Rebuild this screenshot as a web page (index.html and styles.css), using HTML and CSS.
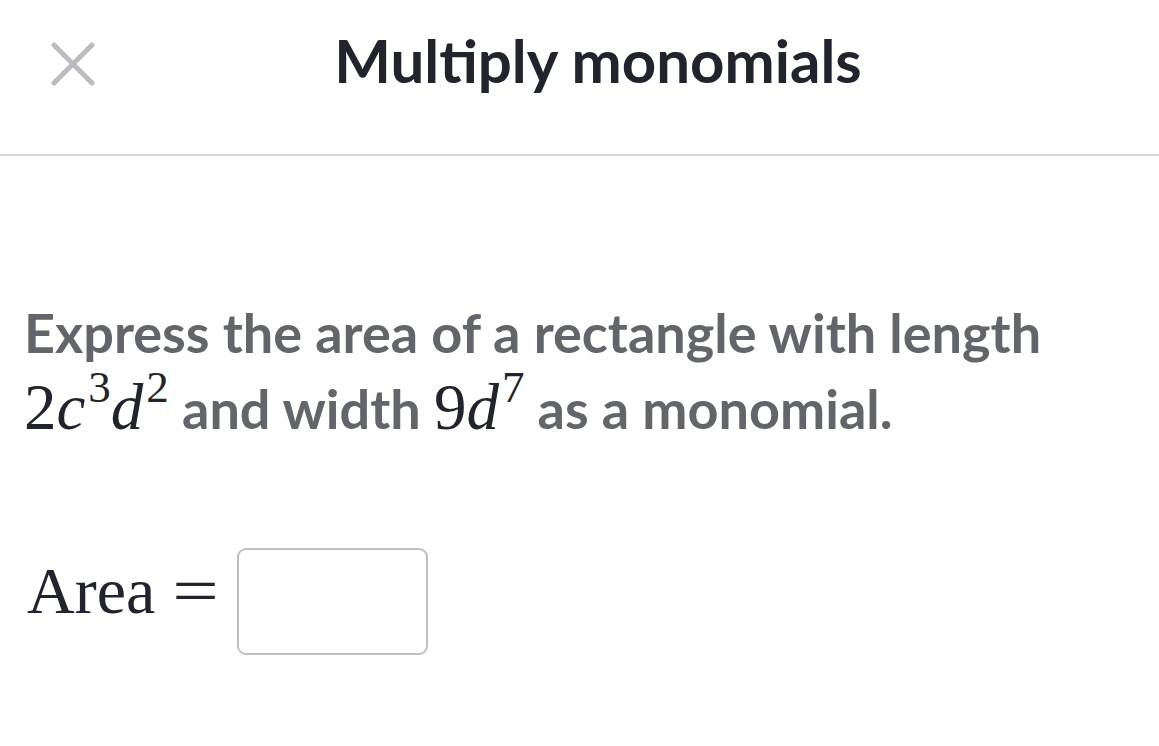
FILE: index.html
```html
<!DOCTYPE html>
<html>
<head>
<meta charset="utf-8">
<link rel="stylesheet" href="styles.css">
</head>
<body>
<header class="header">
  <button class="close" aria-label="Close">
    <svg width="44" height="44" viewBox="0 0 44 44"><path d="M3 3 L41 41 M41 3 L3 41" stroke="#babcc0" stroke-width="5" stroke-linecap="round" fill="none"/></svg>
  </button>
  <h1 class="title">Multiply monomials</h1>
</header>
<main class="content">
  <p class="question">Express the area of a rectangle with length <span class="math"><span class="num">2</span><i>c</i><sup>3</sup><i>d</i><sup>2</sup></span> and width <span class="math"><span class="num">9</span><i>d</i><sup>7</sup></span> as a monomial.</p>
  <div class="answer">
    <span class="math big">Area</span>
    <span class="math big eq">=</span>
    <div class="box"></div>
  </div>
</main>
</body>
</html>
```
FILE: styles.css
```css
html, body { margin: 0; padding: 0; background: #fff; }
body { font-family: Lato, "Noto Sans", sans-serif; width: 1159px; height: 746px; overflow: hidden; }
.header { position: relative; height: 154px; border-bottom: 2px solid #d6d6d6; display: flex; align-items: flex-start; }
.close { position: absolute; left: 51px; top: 42px; width: 44px; height: 44px; padding: 0; border: 0; background: none; display: block; }
.close svg { display: block; }
.title { flex: 1; margin: 0; padding: 24px 0 0 37px; text-align: center; font-size: 60px; font-weight: 700; color: #21242c; line-height: 72px; }
.content { padding: 0 24px; }
.question { margin: 140px 0 0; font-size: 54px; font-weight: 700; color: #626569; line-height: 74px; }
.math { font-family: "Liberation Serif", "Times New Roman", serif; font-weight: 400; color: #21242c; font-size: 65px; }
.math i { font-style: italic; }
.math sup { font-size: 45px; vertical-align: 0; position: relative; top: -27px; margin-left: 3px; line-height: 0; }
.answer { display: flex; align-items: center; margin-top: 102px; height: 106px; }
.big { font-size: 66px; line-height: 1; position: relative; top: -10px; }
.big:first-child { margin-left: 3px; }
.eq { margin-left: 22px; transform: scaleX(1.25); }
.box { width: 187px; height: 103px; border: 2.5px solid #bfbfbf; border-radius: 9px; margin-left: 23px; }
```
